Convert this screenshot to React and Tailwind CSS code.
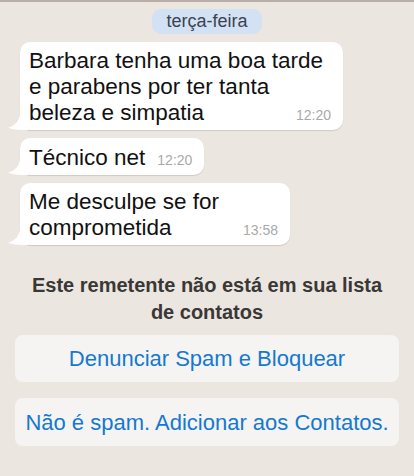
import React from 'react'

function Tail() {
  return (
    <svg className="absolute -left-[12px] bottom-0" width="20" height="16" viewBox="0 0 20 16">
      <path d="M20 0 L20 16 L14 16 C9 16 4 15.2 0 13.8 C7 11.5 11.5 7 12 0 Z" fill="#ffffff" />
    </svg>
  )
}

function Time({ children }) {
  return <span className="mb-[2px] shrink-0 text-[14px] leading-[18px] text-[#a9a9a9]">{children}</span>
}

function Bubble({ width, lines, time, inline }) {
  return (
    <div
      className="relative ml-[20px] self-start rounded-[10px] bg-white pl-[9px] pr-[12px] pt-[6px] pb-[4px] shadow-[0_1px_1px_rgba(0,0,0,0.12)]"
      style={width ? { width } : undefined}
    >
      <Tail />
      {inline ? (
        <div className="relative flex items-end gap-[12px] whitespace-nowrap text-[22.5px] leading-[27px] text-[#111]">
          <span>{lines[0]}</span>
          <Time>{time}</Time>
        </div>
      ) : (
        <div className="relative text-[22.5px] leading-[26px] text-[#111]">
          {lines.slice(0, -1).map((l) => (
            <div key={l} className="whitespace-nowrap">{l}</div>
          ))}
          <div className="flex items-end justify-between">
            <span>{lines[lines.length - 1]}</span>
            <Time>{time}</Time>
          </div>
        </div>
      )}
    </div>
  )
}

export default function App() {
  return (
    <div
      className="flex h-[476px] w-[414px] flex-col overflow-hidden border-t-2 border-[#b9afa7] bg-[#ece6e0]"
      style={{ fontFamily: '"Liberation Sans", Arial, sans-serif' }}
    >
      <div className="mt-[7px] flex justify-center">
        <span className="rounded-[9px] bg-[#d3e1f4] px-[14px] text-[18px] leading-[25px] text-[#3b4250]">
          terça-feira
        </span>
      </div>

      <div className="mt-[8px] flex flex-col gap-[8px]">
        <Bubble
          width={323}
          lines={['Barbara tenha uma boa tarde', 'e parabens por ter tanta', 'beleza e simpatia']}
          time="12:20"
        />
        <Bubble lines={['Técnico net']} time="12:20" inline />
        <Bubble width={270} lines={['Me desculpe se for', 'comprometida']} time="13:58" />
      </div>

      <p className="mt-[27px] text-center text-[20px] font-bold leading-[27px] text-[#3a3836]">
        Este remetente não está em sua lista
        <br />
        de contatos
      </p>

      <div className="mt-[9px] flex flex-col gap-[16px] px-[15px]">
        <button className="h-[47px] rounded-[8px] bg-[#f6f4f2] text-[22px] text-[#1479d0]">
          Denunciar Spam e Bloquear
        </button>
        <button className="h-[48px] rounded-[8px] bg-[#f6f4f2] text-[22px] text-[#1479d0]">
          Não é spam. Adicionar aos Contatos.
        </button>
      </div>
    </div>
  )
}
